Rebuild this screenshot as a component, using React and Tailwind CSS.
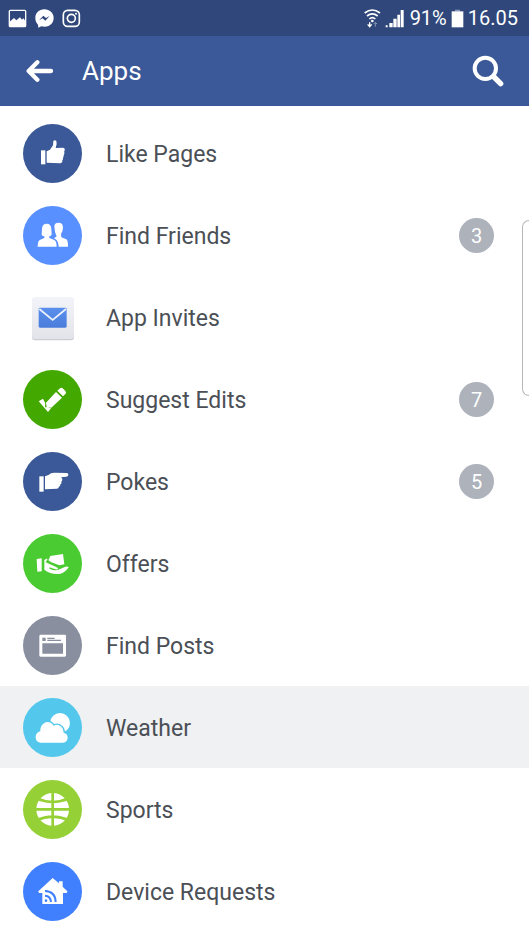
import React from "react";

const LikeIcon = () => (
  <g fill="#fff">
    <path d="M54 79h13v42H54z" />
    <path d="M71 82 81 77 90 64 91 51Q96 46 100 51 103 60 98 72L119 71Q127 72 125 79 123 82 124 86 125 90 122 93 123 98 120 101 121 106 118 109 119 117 111 118L71 116z" />
  </g>
);

const FriendsIcon = () => (
  <g fill="#fff">
    <path d="M94 60Q95 50 107 50 120 50 120 64 120 75 114 84L115 94 130 100Q135 103 135 122H107Q106 106 98 100L93 97Q98 94 101 91 95 80 94 60z" />
    <path d="M57 68Q58 53 71 53 84 53 85 68L86 86Q84 90 79 91V96L94 102Q101 106 101 122H44Q44 106 50 102L64 96V91Q58 91 56 86z" />
  </g>
);

const InvitesIcon = () => (
  <g>
    <rect x="27" y="29" width="126" height="128" rx="10" fill="#c9ccd3" />
    <rect x="27" y="28" width="126" height="125" rx="10" fill="url(#tile)" />
    <rect x="47" y="59" width="84" height="60" rx="4" fill="url(#mail)" />
    <path d="m49 63 40 33 40-33" fill="none" stroke="#eef2fb" strokeWidth="5" />
    <defs>
      <linearGradient id="tile" x1="0" y1="0" x2="0" y2="1">
        <stop offset="0" stopColor="#f2f4fa" />
        <stop offset="1" stopColor="#e2e4ea" />
      </linearGradient>
      <linearGradient id="mail" x1="0" y1="0" x2="0" y2="1">
        <stop offset="0" stopColor="#5b8fec" />
        <stop offset="1" stopColor="#4a7ddb" />
      </linearGradient>
    </defs>
  </g>
);

const EditsIcon = () => (
  <g fill="#fff">
    <path d="m47 94 13-8 7 14-1 12 9-1 9 4-9 11z" />
    <path d="m99 66 18 17-32 30-14-2-2-13z" />
    <path d="m103 62 8-7q4-3 8 0l8 8q4 4 1 8l-8 8z" />
  </g>
);

const PokeIcon = () => (
  <g fill="#fff">
    <path d="M49 73h13v46H49z" />
    <path d="M66 73Q78 70 84 64 88 62 94 62L132 63Q137 65 136 69 135 74 130 74L114 76Q119 79 118 84 117 88 115 89 117 95 112 97 113 103 108 104 107 110 101 110L66 112z" />
  </g>
);

const OffersIcon = () => (
  <g fill="#fff">
    <path d="M41 75 56 73V112L43 113z" />
    <path d="m82 66 38-6 4 31-15 3-24-9-9-6z" />
    <path d="M64 79Q67 73 74 75L68 85 98 98Q107 102 105 106 99 108 80 100L79 104Q98 112 110 106L127 98Q135 96 137 100 127 115 113 119 87 124 64 107z" />
  </g>
);

const PostsIcon = () => (
  <g>
    <rect x="49" y="56" width="80" height="66" rx="4" fill="#fff" />
    <path
      d="M58 65h10v10H58zM73 65h22v4H73zM73 71h41v4H73zM58 82h62v31H58z"
      fill="#898f9f"
    />
  </g>
);

const WeatherIcon = () => (
  <g fill="#fff">
    <circle cx="111" cy="75" r="30" />
    <path
      d="M52 134Q38 132 38 118 38 104 52 100 51 84 63 76 72 69 83 74 89 77 92 83 104 77 115 86 122 92 122 104 134 107 134 119 133 132 120 134z"
      stroke="#54c7ec"
      strokeWidth="8"
      paintOrder="stroke"
    />
  </g>
);

const SportsIcon = () => (
  <g>
    <circle cx="89" cy="88" r="49" fill="#fff" />
    <path
      d="M89 37v102M38 88h102M40 55q49 22 98 0M40 121q49-22 98 0"
      fill="none"
      stroke="#95d136"
      strokeWidth="8"
    />
  </g>
);

const DeviceIcon = () => (
  <g>
    <path
      d="M89 48 108 64V58h11v16l14 14q1 5-4 5h-9v33H58V93h-9q-4-1-3-5z"
      fill="#fff"
    />
    <circle cx="69" cy="116" r="4" fill="#4080ff" />
    <path
      d="M66 101q17 1 18 19M66 87q31 1 32 33"
      fill="none"
      stroke="#4080ff"
      strokeWidth="6"
    />
  </g>
);

const apps = [
  { name: "Like Pages", color: "fill-[#3b5998]", Icon: LikeIcon },
  { name: "Find Friends", color: "fill-[#5890ff]", Icon: FriendsIcon, count: 3 },
  { name: "App Invites", color: "fill-none", Icon: InvitesIcon },
  { name: "Suggest Edits", color: "fill-[#43a800]", Icon: EditsIcon, count: 7 },
  { name: "Pokes", color: "fill-[#3b5998]", Icon: PokeIcon, count: 5 },
  { name: "Offers", color: "fill-[#4bcb32]", Icon: OffersIcon },
  { name: "Find Posts", color: "fill-[#898f9f]", Icon: PostsIcon },
  { name: "Weather", color: "fill-[#54c7ec]", Icon: WeatherIcon, active: true },
  { name: "Sports", color: "fill-[#95d136]", Icon: SportsIcon },
  { name: "Device Requests", color: "fill-[#4080ff]", Icon: DeviceIcon },
];

const StatusBar = () => (
  <div className="flex h-9 items-center justify-between bg-[#2f477a] pl-2 pr-[11px] text-white">
    <div className="flex items-center gap-2">
      <svg className="h-[19px] w-[19px]" viewBox="0 0 57 57">
        <rect x="4" y="4" width="49" height="49" rx="3" fill="none" stroke="#fff" strokeWidth="4" />
        <path d="M4 39 18 27 25 34 36 25 42 32 46 28 53 37V53H4z" fill="#fff" />
      </svg>
      <svg className="h-[19px] w-[19px]" viewBox="0 0 57 57">
        <path d="M28 1C12 1 1 12 1 27 1 36 4 42 9 47L10 56 19 52C43 58 56 42 56 27 56 12 44 1 28 1z" fill="#fff" />
        <path d="m12 34 13-14 8 7 11-6-13 14-8-7z" fill="#2f477a" />
      </svg>
      <svg className="h-[19px] w-[19px]" viewBox="0 0 57 57" fill="none" stroke="#fff" strokeWidth="5">
        <rect x="4" y="4" width="48" height="48" rx="13" />
        <circle cx="28" cy="28" r="12" />
        <circle cx="42" cy="14" r="3" fill="#fff" stroke="none" />
      </svg>
    </div>
    <div className="flex items-center gap-1">
      <svg className="h-[19px] w-[17px]" viewBox="0 0 51 57" fill="none" stroke="#fff" strokeWidth="5">
        <path d="M2 12q23-18 46 0M9 21q16-13 32 0M16 30q9-8 18 0" />
        <circle cx="25" cy="36" r="4" fill="#fff" stroke="none" />
        <path d="M17 40v12M11 46l6 7 6-7" strokeWidth="4" />
        <path d="M34 53V41M29 45l5-5 5 5" stroke="#8797b8" strokeWidth="3" />
      </svg>
      <svg className="h-[19px] w-[19px]" viewBox="0 0 57 57" fill="#fff">
        <path d="M2 49h6v6H2zM13 42h10v13h-10zM25 29h10v26h-10zM37 17h8v38h-8zM47 3h9v52h-9z" />
      </svg>
      <span className="ml-0.5 text-[20px] leading-6">91%</span>
      <svg className="h-[19px] w-[13px]" viewBox="0 0 39 57">
        <path d="M12 2h15v6H12z" fill="#8797b8" />
        <path d="M2 7h35v48H2z" fill="#fff" />
      </svg>
      <span className="text-[20px] leading-6">16.05</span>
    </div>
  </div>
);

const Header = () => (
  <header className="flex h-[70px] items-center bg-[#3b5998] pl-[26px] pr-[25px] text-white">
    <button type="button" aria-label="Back">
      <svg
        className="h-7 w-7"
        viewBox="0 0 84 84"
        fill="none"
        stroke="#fff"
        strokeWidth="13"
        strokeLinecap="round"
        strokeLinejoin="round"
      >
        <path d="M75 42H10M34 16 8 42l26 26" />
      </svg>
    </button>
    <h1 className="ml-7 flex-1 text-[26px] leading-8">Apps</h1>
    <button type="button" aria-label="Search">
      <svg className="h-8 w-8" viewBox="0 0 96 96" fill="none" stroke="#fff" strokeLinecap="round">
        <circle cx="40" cy="40" r="32" strokeWidth="12" />
        <path d="m66 66 20 20" strokeWidth="16" />
      </svg>
    </button>
  </header>
);

const App = () => {
  return (
    <div className="relative min-h-screen overflow-hidden bg-white font-['Roboto',sans-serif]">
      <StatusBar />
      <Header />
      <ul className="pt-1.5">
        {apps.map(({ name, color, Icon, count, active }) => (
          <li key={name}>
            <a
              href="#"
              className={`flex items-center pb-[11px] pl-[23px] pr-[35px] pt-3 ${
                active ? "bg-[#eff1f3]" : ""
              }`}
            >
              <svg className="h-[59px] w-[59px] shrink-0" viewBox="0 0 177 177">
                <circle cx="88.5" cy="88.5" r="88.5" className={color} />
                <Icon />
              </svg>
              <span className="ml-6 flex-1 pt-0.5 text-[23px] leading-8 text-[#4b4f56]">
                {name}
              </span>
              {count && (
                <span className="flex h-[35px] w-[35px] items-center justify-center rounded-full bg-[#adb2bb] text-[20px] leading-6 text-white">
                  {count}
                </span>
              )}
            </a>
          </li>
        ))}
      </ul>
      {/* edge panel handle */}
      <div className="absolute right-0 top-[220px] h-[176px] w-[7px] rounded-l-lg border border-r-0 border-[#b8b8b8] bg-white" />
    </div>
  );
};

export default App;
